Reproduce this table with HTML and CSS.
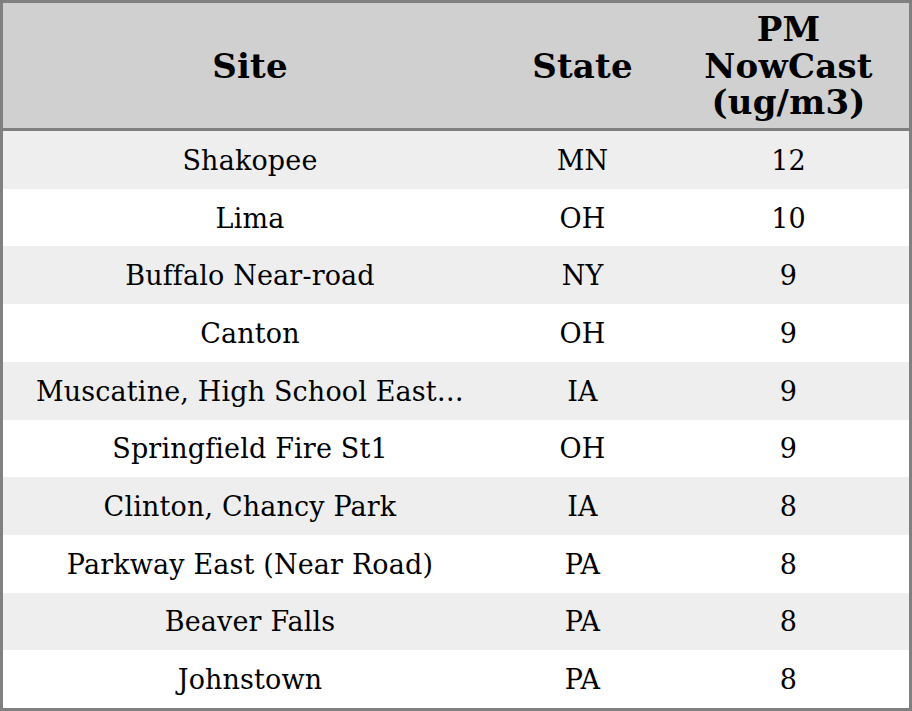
FILE: index.html
```html
<!DOCTYPE html>
<html>
<head>
<meta charset="utf-8">
<link rel="stylesheet" href="styles.css">
</head>
<body>
<div class="tbl">
  <div class="head">
    <div class="hc c-site">Site</div>
    <div class="hc c-state">State</div>
    <div class="hc c-pm">PM<br>NowCast<br>(ug/m3)</div>
  </div>
  <div class="row odd"><div class="c c-site">Shakopee</div><div class="c c-state">MN</div><div class="c c-pm">12</div></div>
  <div class="row"><div class="c c-site">Lima</div><div class="c c-state">OH</div><div class="c c-pm">10</div></div>
  <div class="row odd"><div class="c c-site">Buffalo Near-road</div><div class="c c-state">NY</div><div class="c c-pm">9</div></div>
  <div class="row"><div class="c c-site">Canton</div><div class="c c-state">OH</div><div class="c c-pm">9</div></div>
  <div class="row odd"><div class="c c-site">Muscatine, High School East…</div><div class="c c-state">IA</div><div class="c c-pm">9</div></div>
  <div class="row"><div class="c c-site">Springfield Fire St1</div><div class="c c-state">OH</div><div class="c c-pm">9</div></div>
  <div class="row odd"><div class="c c-site">Clinton, Chancy Park</div><div class="c c-state">IA</div><div class="c c-pm">8</div></div>
  <div class="row"><div class="c c-site">Parkway East (Near Road)</div><div class="c c-state">PA</div><div class="c c-pm">8</div></div>
  <div class="row odd"><div class="c c-site">Beaver Falls</div><div class="c c-state">PA</div><div class="c c-pm">8</div></div>
  <div class="row"><div class="c c-site">Johnstown</div><div class="c c-state">PA</div><div class="c c-pm">8</div></div>
</div>
</body>
</html>
```
FILE: styles.css
```css
html, body {
  margin: 0;
  padding: 0;
  background: #ffffff;
}
.tbl {
  box-sizing: border-box;
  width: 912px;
  height: 711px;
  border: 3px solid #808080;
  display: flex;
  flex-direction: column;
  font-family: "DejaVu Serif", serif;
  color: #000;
}
.head {
  display: flex;
  height: 125px;
  flex: none;
  background: #d0d0d0;
  border-bottom: 3px solid #808080;
}
.row {
  display: flex;
  flex: 1;
  background: #ffffff;
}
.row.odd {
  background: #eeeeee;
}
.hc, .c {
  display: flex;
  align-items: center;
  justify-content: center;
  text-align: center;
  white-space: nowrap;
}
.hc {
  font-weight: bold;
  font-size: 34px;
  line-height: 36.5px;
  letter-spacing: 0.2px;
  padding-top: 1px;
}
.c {
  font-size: 27px;
  letter-spacing: 0.15px;
  padding-top: 1px;
}
.c-site { width: 494px; }
.c-state { width: 171px; }
.c-pm { flex: 1; }
```
